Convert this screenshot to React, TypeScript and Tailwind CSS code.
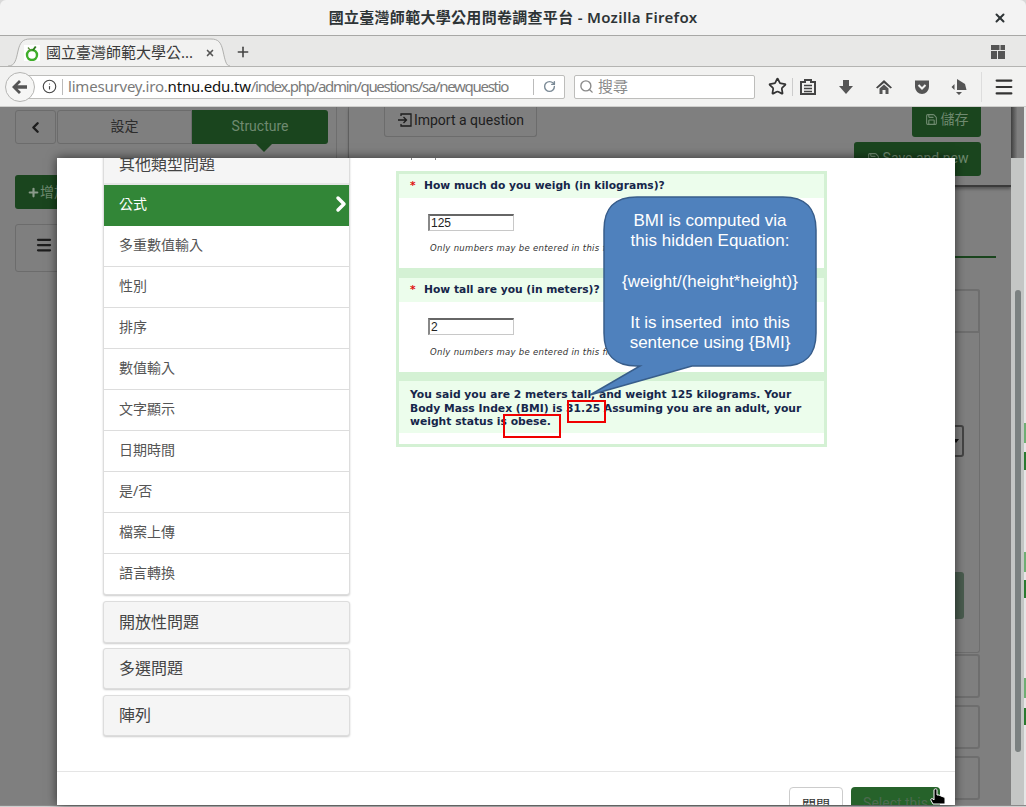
import React from 'react';
import { ChevronLeft, ChevronRight, Info, Menu, Plus, RotateCw, Save, Search, Star, X } from 'lucide-react';

const CJK = "font-['Noto_Sans','Noto_Sans_CJK_TC',sans-serif]";
const ROBOTO = "font-['Roboto','Noto_Sans_CJK_TC',sans-serif]";

const ITEMS = ['多重數值輸入', '性別', '排序', '數值輸入', '文字顯示', '日期時間', '是/否', '檔案上傳'];

const Favicon = () => (
  <svg width="16" height="16" viewBox="0 0 16 16">
    <rect width="16" height="16" fill="#fff" />
    <circle cx="8" cy="10" r="5" fill="none" stroke="#3fae2a" strokeWidth="2.4" />
    <path d="M8 5 L11 1 L12.5 2 L9.5 6 Z" fill="#2c7a1c" />
    <path d="M7 5 L4.5 2 L3.5 3 L6 6 Z" fill="#5b8a3c" />
  </svg>
);

const Toolbar = () => (
  <div className="flex items-center h-[24px] text-[#4d4d4d]">
    <Star size={19} strokeWidth={2.2} className="ml-[13px] text-[#333]" />
    <div className="w-px h-[18px] bg-[#ccc] ml-[5px]" />
    <svg width="16" height="16" viewBox="0 0 16 16" className="ml-[7px]">
      <path d="M1 3 H5 V1 H11 V3 H15 V15 H1 Z" fill="none" stroke="#444" strokeWidth="2" />
      <path d="M4 6.5 H12 M4 9.5 H12 M4 12.5 H12" stroke="#444" strokeWidth="1.6" />
    </svg>
    <svg width="16" height="16" viewBox="0 0 16 16" className="ml-[22px]">
      <path d="M5 1 H11 V7 H15 L8 15 L1 7 H5 Z" fill="#555" />
    </svg>
    <svg width="18" height="16" viewBox="0 0 18 16" className="ml-[21px]">
      <path d="M9 1 L17 8.5 L15.6 9.6 L9 4 L2.4 9.6 L1 8.5 Z" fill="#444" />
      <path d="M4.5 9.5 L9 5.6 L13.5 9.5 V15 H10.5 V11 H7.5 V15 H4.5 Z" fill="#555" />
    </svg>
    <svg width="16" height="16" viewBox="0 0 16 16" className="ml-[21px]">
      <path d="M1 1.5 H15 V7.5 C15 12 11.5 15 8 15 C4.5 15 1 12 1 7.5 Z" fill="#555" />
      <path d="M4.5 6 L8 9.5 L11.5 6" fill="none" stroke="#f2f2f1" strokeWidth="2" />
    </svg>
    <svg width="16" height="18" viewBox="0 0 16 18" className="ml-[21px]">
      <path d="M6 1 L14 6 L15.5 12 H6 Z" fill="#555" />
      <path d="M3.5 6 V12 L0.5 9 Z M5 14 H11 L8 17 Z" fill="#555" />
    </svg>
    <div className="w-px h-[30px] bg-[#ddd] ml-[14px]" />
    <Menu size={22} strokeWidth={2.4} className="ml-[11px] text-[#333]" />
  </div>
);

const BrowserChrome = () => (
  <>
    <div className={`relative h-[36px] shrink-0 bg-[#f3f3f3] rounded-t-[6px] border-b border-[#a8a8a6] flex items-center justify-center ${CJK}`}>
      <span className="text-[15px] font-semibold text-[#2e3436] tracking-[0.3px]">國立臺灣師範大學公用問卷調查平台 - Mozilla Firefox</span>
      <X size={14} strokeWidth={3.4} className="absolute right-[19px] top-[11px] text-[#2e3436]" />
    </div>
    <div className={`h-[31px] shrink-0 bg-[#e8e8e7] border-b border-[#b4b4b2] flex items-end pl-[8px] ${CJK}`}>
      <div className="relative w-[222px] h-[29px] -mb-px">
        <svg width="222" height="29" viewBox="0 0 222 29" className="absolute inset-0">
          <path d="M0 28 C7 28 8 22 10 13 C12 4 15 1 22 1 H203 C210 1 213 4 215 13 C217 22 218 28 222 28" fill="#f2f2f1" stroke="#b0b0ae" />
        </svg>
        <div className="relative flex items-center h-full pl-[16px] text-[15px] text-[#3a3a3a]">
          <Favicon />
          <span className="ml-[6px]">國立臺灣師範大學公...</span>
          <X size={10} strokeWidth={4} className="ml-[12px] text-[#555]" />
        </div>
      </div>
      <Plus size={16} strokeWidth={2.4} className="ml-[5px] mb-[6px] text-[#444]" />
      <svg width="14" height="14" viewBox="0 0 14 14" className="ml-auto mr-[21px] mb-[7px]">
        <path d="M0 0 H8.5 V5 H0 Z M9.5 0 H14 V5 H9.5 Z M0 6 H6 V14 H0 Z M7 6 H14 V14 H7 Z" fill="#555" />
      </svg>
    </div>
    <div className={`relative h-[40px] shrink-0 bg-[#f2f2f1] border-b border-[#cfcfcd] flex items-center ${CJK}`}>
      <div className="relative z-10 ml-[5px] w-[30px] h-[30px] rounded-full bg-[#f6f6f5] border border-[#b5b5b3] flex items-center justify-center">
        <svg width="16" height="14" viewBox="0 0 16 14">
          <path d="M7 0 L9 2 L5.5 5.2 H15 V8.8 H5.5 L9 12 L7 14 L0 7 Z" fill="#555" />
        </svg>
      </div>
      <div className="-ml-[15px] w-[545px] h-[24px] bg-white border border-[#bdbdbb] rounded-r-[2px] flex items-center pl-[21px]">
        <Info size={15} strokeWidth={1.8} className="text-[#444]" />
        <div className="w-px h-[16px] bg-[#bbb] ml-[5px]" />
        <div className="w-[441px] ml-[5px] overflow-hidden whitespace-nowrap text-[15px] text-[#7a7a7a] tracking-[-0.2px]">
          limesurvey.iro.<span className="text-[#111]">ntnu.edu.tw</span>
          <span className="tracking-[-1.3px]">/index.php/admin/questions/sa/newquestion</span>
        </div>
        <div className="w-px h-[16px] bg-[#bbb] ml-[24px]" />
        <RotateCw size={13} strokeWidth={2.6} className="ml-[9px] text-[#7b8a96]" />
      </div>
      <div className="ml-[9px] w-[181px] h-[24px] bg-white border border-[#bdbdbb] rounded-[2px] flex items-center pl-[4px]">
        <Search size={15} strokeWidth={2.2} className="text-[#8a8a8a]" />
        <span className="ml-[4px] text-[15px] text-[#8a8a8a]">搜尋</span>
      </div>
      <Toolbar />
    </div>
  </>
);

// 後面被遮罩蓋住的頁面
const BackgroundPage = () => (
  <div className={`flex-1 min-h-0 bg-[#7f7f7f] flex ${ROBOTO}`}>
    <div className="flex-1 min-w-0 flex overflow-hidden">
      <div className="w-[337px] shrink-0 border-r border-[#6e6e6e] pl-[15px] pt-[3px]">
        <div className="flex h-[34px]">
          <div className="w-[41px] border border-[#6c6c6c] rounded-[3px] flex items-center justify-center">
            <ChevronLeft size={17} strokeWidth={3.4} className="text-[#1d1d1d]" />
          </div>
          <div className="relative ml-[1px] w-[271px] flex text-[14px]">
            <div className="w-[135px] border border-[#6c6c6c] rounded-l-[3px] flex items-center justify-center pb-[1px] text-[#2c2c2c]">設定</div>
            <div className="w-[136px] bg-[#1a451e] rounded-r-[3px] flex items-center justify-center pb-[1px] text-[#6f8a70]">Structure</div>
            <div className="absolute left-[199px] top-[34px] w-0 h-0 border-x-[8px] border-x-transparent border-t-[8px] border-t-[#1a451e]" />
          </div>
        </div>
        <div className="mt-[31px] w-[60px] h-[34px] bg-[#1a451e] rounded-[3px] flex items-center pl-[12px] text-[14px] text-[#6f8a70]">
          <Plus size={13} strokeWidth={4} className="text-[#8a9a8a]" />增加
        </div>
        <div className="mt-[15px] w-[80px] h-[48px] border border-[#6c6c6c] rounded-[3px] flex items-center pl-[19px] pb-[6px]">
          <Menu size={18} strokeWidth={3} className="text-[#1d1d1d]" />
        </div>
      </div>
      <div className="w-[12px] shrink-0 border-r border-[#6e6e6e] h-[80px]" />
      <div className="flex-1 min-w-0">
        <div className="h-[80px] border-b-2 border-[#3a3a3a] shadow-[0_2px_3px_rgba(0,0,0,0.35)] flex justify-between pl-[35px] pr-[30px] text-[14px]">
          <div className="w-[153px] h-[30px] border border-[#6c6c6c] border-t-0 rounded-b-[3px] flex items-center justify-center gap-[1px] pb-[3px] text-[#1d1d1d]">
            <svg width="16" height="16" viewBox="0 0 16 16" fill="none" stroke="#1d1d1d" strokeWidth="1.3">
              <path d="M4 4 V2 H14 V14 H4 V12 M1 8 H9 M6.5 5 L9.5 8 L6.5 11" />
            </svg>
            Import a question
          </div>
          <div className="flex flex-col items-end gap-[5px]">
            <div className="w-[69px] h-[30px] bg-[#1a451e] rounded-b-[3px] flex items-center justify-center gap-[3px] pb-[5px] text-[#6f8a70]">
              <Save size={13} />儲存
            </div>
            <div className="w-[127px] h-[34px] bg-[#1a451e] rounded-[3px] flex items-center justify-center gap-[3px] pb-[2px] text-[#6f8a70]">
              <Save size={13} />Save and new
            </div>
          </div>
        </div>
        <div className="mr-[15px] mt-[69px] h-[2px] bg-[#1a451e]" />
        <div className="mr-[31px] mt-[31px] border-x border-b border-[#6e6e6e] rounded-[3px] h-[364px]">
          <div className="h-[44px] -mx-px border-2 border-[#6e6e6e] rounded-t-[3px]" />
          <div className="mt-[92px] mr-[15px] h-[32px] border-2 border-[#444] rounded-[3px] flex items-center justify-end pr-[3px]">
            <div className="w-0 h-0 border-x-[3px] border-x-transparent border-t-[4px] border-t-[#111]" />
          </div>
          <div className="mt-[115px] mr-[15px] h-[47px] bg-[#4a5c4f] rounded-[3px]" />
        </div>
        <div className="mr-[31px] mt-[1px] h-[44px] border-2 border-[#6e6e6e] rounded-[3px]" />
        <div className="mr-[31px] mt-[7px] h-[44px] border-2 border-[#6e6e6e] rounded-[3px]" />
        <div className="mr-[31px] mt-[7px] h-[44px] border-2 border-[#6e6e6e] rounded-[3px]" />
      </div>
    </div>
    <div className="w-[13px] shrink-0 flex flex-col">
      <div className="h-[51px] bg-[linear-gradient(90deg,#3f3f3f,#7f7f7f_50%)]" />
      <div className="flex-1 bg-[#c4c6c5] pl-[4px]">
        <div className="mt-[132px] w-[6px] h-[462px] bg-[#7b8181] rounded-full" />
      </div>
    </div>
    <div className="w-[2px] shrink-0 bg-[#e6e6e6] flex flex-col">
      <div className="mt-[316px] h-[20px] bg-[#6fae74]" />
      <div className="mt-[9px] h-[18px] bg-[#2a7a30]" />
      <div className="mt-[82px] h-[20px] bg-[#6fae74]" />
      <div className="mt-[8px] h-[18px] bg-[#2a7a30]" />
      <div className="mt-[80px] h-[20px] bg-[#6fae74]" />
      <div className="mt-[10px] h-[17px] bg-[#2a7a30]" />
    </div>
  </div>
);

const Question = ({ title, value }: { title: string; value: string }) => (
  <>
    <div className="h-[24px] bg-[#ecfdec] flex items-center pl-[11px] text-[10.7px] font-bold text-[#16264a]">
      <span className="text-[#e01010] w-[14px]">*</span>
      {title}
    </div>
    <div className="h-[70px] bg-white pl-[29px] pt-[16px]">
      <div className="w-[86px] h-[17px] bg-white border border-[#c8c8c8] border-t-2 border-l-2 border-t-[#666] border-l-[#888] pl-[1px] text-[12px] leading-[14px] font-['Liberation_Sans',sans-serif] text-[#222]">{value}</div>
      <div className="mt-[11px] ml-[2px] text-[8.5px] italic text-[#333] tracking-[0.3px]">Only numbers may be entered in this field</div>
    </div>
  </>
);

// 範例截圖：BMI 問卷
const PreviewShot = () => (
  <div className="relative w-[431px] h-[276px] border-[3px] border-[#d4f1d4] bg-white font-['DejaVu_Sans',sans-serif] overflow-hidden">
    <Question title="How much do you weigh (in kilograms)?" value="125" />
    <div className="h-[10px] bg-[#d4f1d4]" />
    <Question title="How tall are you (in meters)?" value="2" />
    <div className="h-[9px] bg-[#d4f1d4]" />
    <div className="h-[52px] bg-[#ecfdec] pl-[11px] pt-[7px] pr-[8px] text-[10.75px] leading-[13.5px] font-bold text-[#16264a]">
      You said you are 2 meters tall, and weight 125 kilograms. Your Body Mass Index (BMI) is 31.25 Assuming you are an adult, your weight status is obese.
    </div>
    <div className="absolute left-[168px] top-[226px] w-[39px] h-[23px] border-2 border-[#f00000]" />
    <div className="absolute left-[104px] top-[240px] w-[58px] h-[24px] border-2 border-[#f00000]" />
    <svg width="240" height="205" viewBox="0 0 240 205" className="absolute left-[188px] top-[22px]">
      <path
        d="M50 1 H196 C219 1 229 12 229 34 V137 C229 159 219 170 196 170 H105 L3 199 L53 170 H50 C27 170 17 159 17 137 V34 C17 12 27 1 50 1 Z"
        fill="#4f81bd"
        stroke="#385d8a"
        strokeWidth="1.5"
      />
    </svg>
    <div className="absolute left-[205px] top-[37px] w-[212px] text-center text-[17px] leading-[20.4px] text-white font-['Liberation_Sans',sans-serif] whitespace-pre">
      {'BMI is computed via\nthis hidden Equation:\n\n{weight/(height*height)}\n\nIt is inserted  into this\nsentence using {BMI}'}
    </div>
  </div>
);

const QuestionTypes = () => (
  <div className="w-[247px] shrink-0 -mt-[15px]">
    <div className="border border-[#ddd] rounded-[3px] shadow-[0_1px_2px_#ccc] bg-white overflow-hidden">
      <div className="h-[41px] bg-[#f5f5f5] border-b-2 border-[#e6e6e6] flex items-center pl-[15px] text-[16px] text-[#444]">其他類型問題</div>
      <div className="h-[41px] bg-[#328637] flex items-center justify-between pl-[15px] -mr-[4px] text-[14px] text-white">
        <span className="pb-[4px]">公式</span>
        <ChevronRight size={24} strokeWidth={3.5} className="mb-[3px]" />
      </div>
      {ITEMS.map(t => (
        <div key={t} className="h-[41px] border-b border-[#ddd] flex items-center pl-[15px] pb-[4px] text-[14px] text-[#555]">{t}</div>
      ))}
      <div className="h-[40px] flex items-center pl-[15px] pb-[4px] text-[14px] text-[#555]">語言轉換</div>
    </div>
    <div className="mt-[6px] h-[42px] bg-[#f5f5f5] border border-[#ddd] rounded-[3px] shadow-[0_1px_2px_#ccc] flex items-center pl-[15px] text-[16px] text-[#444]">開放性問題</div>
    <div className="mt-[5px] h-[41px] bg-[#f5f5f5] border border-[#ddd] rounded-[3px] shadow-[0_1px_2px_#ccc] flex items-center pl-[15px] pb-[2px] text-[16px] text-[#444]">多選問題</div>
    <div className="mt-[6px] h-[41px] bg-[#f5f5f5] border border-[#ddd] rounded-[3px] shadow-[0_1px_2px_#ccc] flex items-center pl-[15px] pb-[2px] text-[16px] text-[#444]">陣列</div>
  </div>
);

const App: React.FC = () => {
  return (
    <div className="relative w-[1026px] h-[807px] overflow-hidden bg-[#d9d9d9] flex flex-col">
      <BrowserChrome />
      <BackgroundPage />
      <div className="h-[2px] shrink-0 bg-[#cfcfcf] border-t border-[#8a8a8a]" />

      {/* 問題類型 modal */}
      <div className={`absolute left-[57px] top-[158px] w-[898px] h-[647px] bg-white shadow-[0_0_10px_rgba(0,0,0,0.6)] flex flex-col ${CJK}`}>
        <div className="h-[613px] shrink-0 overflow-hidden flex pl-[46px]">
          <QuestionTypes />
          <div className="ml-[46px]">
            <div className="h-[13px] flex pl-[15px] gap-[23px]">
              <div className="w-px h-[2px] bg-[#888]" />
              <div className="w-px h-[2px] bg-[#888]" />
            </div>
            <PreviewShot />
          </div>
        </div>
        <div className="flex-1 border-t border-[#e5e5e5] overflow-hidden flex justify-end pr-[15px] pt-[15px] gap-[8px] text-[14px]">
          <div className="w-[54px] h-[34px] border border-[#ccc] rounded-[4px] flex justify-center pt-[6px] text-[#333]">關閉</div>
          <div className={`w-[89px] h-[34px] bg-[#26622a] rounded-[4px] flex justify-center pt-[6px] text-[#4d6a50] ${ROBOTO}`}>Select this</div>
        </div>
        <svg width="16" height="20" viewBox="0 0 16 20" className="absolute left-[873px] top-[630px]">
          <path d="M5 1 C6 0.5 7 1 7 2 V7 L9 7 L11 8 L13.5 9 C14.5 9.5 15 10 15 11 V16 H3 L0.8 12 C0.5 11 1.5 10 3 11 L4 12 V2 C4 1.5 4.5 1 5 1 Z" fill="#000" stroke="#fff" strokeWidth="1" />
        </svg>
      </div>
    </div>
  );
};

export default App;
